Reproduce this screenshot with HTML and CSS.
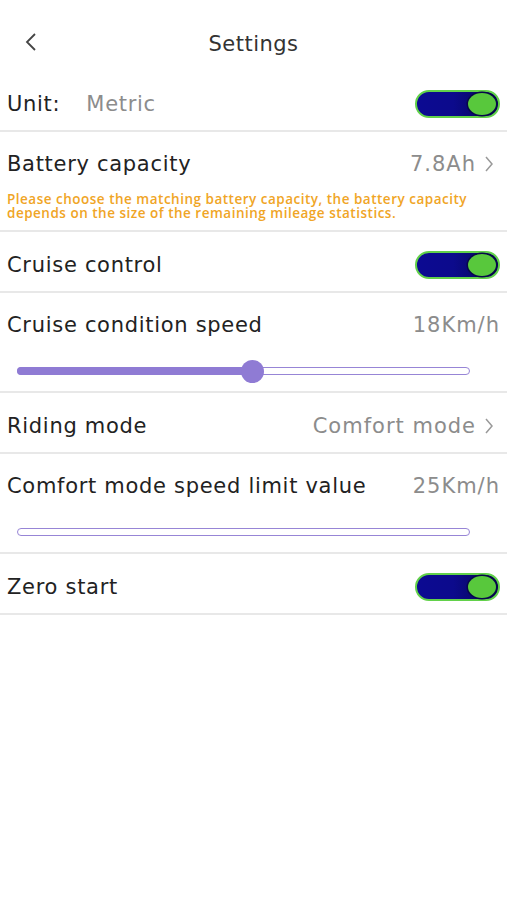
FILE: index.html
```html
<!DOCTYPE html>
<html lang="en">
<head>
    <meta charset="UTF-8">
    <meta name="viewport" content="width=device-width, initial-scale=1.0">
    <title>Settings</title>
    <link rel="stylesheet" href="styles.css">
</head>
<body>
    <div class="header">
        <span class="back">
            <svg width="14" height="20" viewBox="0 0 14 20"><path d="M11 2 L3 10 L11 18" fill="none" stroke="#444" stroke-width="1.8"/></svg>
        </span>
        <h1>Settings</h1>
    </div>

    <div class="row">
        <div class="label">Unit:<span class="unit-value">Metric</span></div>
        <div class="toggle on"><span class="knob"></span></div>
    </div>

    <div class="row tall">
        <div class="row-top">
            <span class="label">Battery capacity</span>
            <span class="value">7.8Ah <svg class="chevron" width="10" height="18" viewBox="0 0 10 18"><path d="M2 2 L8 9 L2 16" fill="none" stroke="#999" stroke-width="1.5"/></svg></span>
        </div>
        <p class="note">Please choose the matching battery capacity, the battery capacity depends on the size of the remaining mileage statistics.</p>
    </div>

    <div class="row">
        <span class="label">Cruise control</span>
        <div class="toggle on"><span class="knob"></span></div>
    </div>

    <div class="row tall">
        <div class="row-top">
            <span class="label">Cruise condition speed</span>
            <span class="value">18Km/h</span>
        </div>
        <div class="slider">
            <div class="slider-fill" style="width: 52%;"></div>
            <span class="slider-thumb" style="left: 52%;"></span>
        </div>
    </div>

    <div class="row">
        <span class="label">Riding mode</span>
        <span class="value">Comfort mode <svg class="chevron" width="10" height="18" viewBox="0 0 10 18"><path d="M2 2 L8 9 L2 16" fill="none" stroke="#999" stroke-width="1.5"/></svg></span>
    </div>

    <div class="row tall">
        <div class="row-top">
            <span class="label">Comfort mode speed limit value</span>
            <span class="value">25Km/h</span>
        </div>
        <div class="slider">
            <div class="slider-fill" style="width: 0%;"></div>
        </div>
    </div>

    <div class="row">
        <span class="label">Zero start</span>
        <div class="toggle on"><span class="knob"></span></div>
    </div>
</body>
</html>
```

FILE: styles.css
```css
body {
    margin: 0;
    padding: 0;
    background-color: #fff;
    color: #222;
    font-family: "DejaVu Sans", Arial, sans-serif;
}

.header {
    height: 71px;
    display: flex;
    align-items: center;
    justify-content: center;
    position: relative;
    padding-top: 16px;
    box-sizing: border-box;
}

.header h1 {
    margin: 0;
    font-size: 21px;
    font-weight: normal;
    color: #333;
    letter-spacing: 0.5px;
}

.back {
    position: absolute;
    left: 24px;
    top: 32px;
}

.row {
    height: 61px;
    box-sizing: border-box;
    border-bottom: 2px solid #e8e8e8;
    padding: 7px 7px 0 7px;
    display: flex;
    align-items: center;
    justify-content: space-between;
}

.row.tall {
    height: 100px;
    flex-direction: column;
    align-items: stretch;
    justify-content: flex-start;
    padding-top: 20px;
}

.row-top {
    display: flex;
    justify-content: space-between;
    align-items: center;
}

.label {
    font-size: 21px;
    letter-spacing: 0.7px;
}

.unit-value {
    color: #8c8c8c;
    margin-left: 26px;
}

.value {
    font-size: 21px;
    color: #8c8c8c;
    letter-spacing: 1px;
    display: flex;
    align-items: center;
}

.chevron {
    margin-left: 8px;
    margin-right: 6px;
}

.note {
    margin: 16px 10px 0 0;
    font-family: "Open Sans", sans-serif;
    font-weight: 600;
    font-size: 13.5px;
    letter-spacing: 0.5px;
    line-height: 14px;
    color: #f0a526;
}

.toggle {
    width: 85px;
    height: 28px;
    box-sizing: border-box;
    border: 2px solid #62d14a;
    border-radius: 14px;
    background: linear-gradient(to right, #0c0a92 0%, #0c0a8c 45%, #05054e 100%);
    position: relative;
}

.toggle .knob {
    position: absolute;
    right: 2px;
    top: 1px;
    width: 28px;
    height: 22px;
    border-radius: 50%;
    background-color: #58c83c;
    box-shadow: 0 0 0 1.5px #07074a;
}

.slider {
    position: relative;
    margin: 30px 30px 0 10px;
    height: 8px;
    box-sizing: border-box;
    border: 1.5px solid #9785d6;
    border-radius: 4px;
    background-color: #fff;
}

.slider-fill {
    position: absolute;
    left: -1.5px;
    top: -1.5px;
    height: 8px;
    border-radius: 4px;
    background-color: #8f7bd4;
}

.slider-thumb {
    position: absolute;
    top: -8.5px;
    width: 23px;
    height: 23px;
    margin-left: -12px;
    border-radius: 50%;
    background-color: #8f7bd4;
}
```
